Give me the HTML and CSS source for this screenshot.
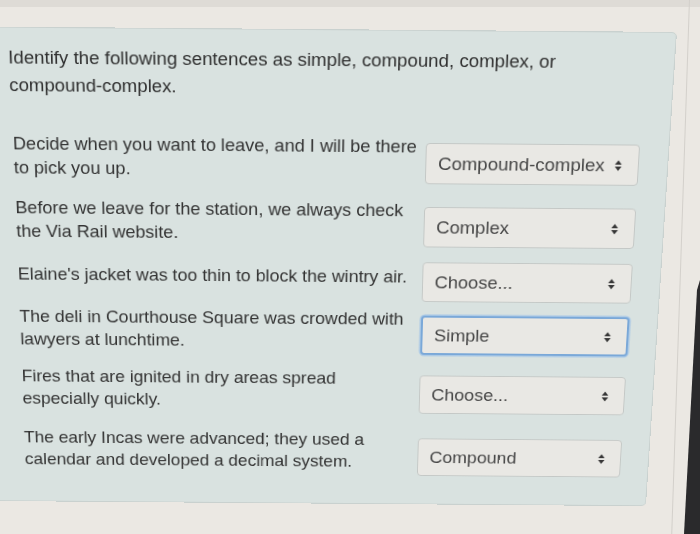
FILE: index.html
```html
<!DOCTYPE html>
<html>
<head>
<meta charset="utf-8">
<link rel="stylesheet" href="styles.css">
</head>
<body>
<div class="screen">
  <div class="top-band"></div>
  <div class="bezel-line"></div>
  <div class="bezel-dark"></div>
  <div class="panel">
    <p class="prompt">Identify the following sentences as simple, compound, complex, or<br>compound-complex.</p>
    <div class="rows">
      <div class="row">
        <p class="sentence">Decide when you want to leave, and I will be there<br>to pick you up.</p>
        <div class="select"><span>Compound-complex</span><svg class="arrows" viewBox="0 0 8 12"><path d="M4 0.5 L7.5 5 H0.5 Z M4 11.5 L7.5 7 H0.5 Z"/></svg></div>
      </div>
      <div class="row">
        <p class="sentence">Before we leave for the station, we always check<br>the Via Rail website.</p>
        <div class="select"><span>Complex</span><svg class="arrows" viewBox="0 0 8 12"><path d="M4 0.5 L7.5 5 H0.5 Z M4 11.5 L7.5 7 H0.5 Z"/></svg></div>
      </div>
      <div class="row">
        <p class="sentence">Elaine's jacket was too thin to block the wintry air.</p>
        <div class="select"><span>Choose...</span><svg class="arrows" viewBox="0 0 8 12"><path d="M4 0.5 L7.5 5 H0.5 Z M4 11.5 L7.5 7 H0.5 Z"/></svg></div>
      </div>
      <div class="row">
        <p class="sentence">The deli in Courthouse Square was crowded with<br>lawyers at lunchtime.</p>
        <div class="select focused"><span>Simple</span><svg class="arrows" viewBox="0 0 8 12"><path d="M4 0.5 L7.5 5 H0.5 Z M4 11.5 L7.5 7 H0.5 Z"/></svg></div>
      </div>
      <div class="row">
        <p class="sentence">Fires that are ignited in dry areas spread<br>especially quickly.</p>
        <div class="select"><span>Choose...</span><svg class="arrows" viewBox="0 0 8 12"><path d="M4 0.5 L7.5 5 H0.5 Z M4 11.5 L7.5 7 H0.5 Z"/></svg></div>
      </div>
      <div class="row">
        <p class="sentence">The early Incas were advanced; they used a<br>calendar and developed a decimal system.</p>
        <div class="select"><span>Compound</span><svg class="arrows" viewBox="0 0 8 12"><path d="M4 0.5 L7.5 5 H0.5 Z M4 11.5 L7.5 7 H0.5 Z"/></svg></div>
      </div>
    </div>
  </div>
</div>
</body>
</html>
```
FILE: styles.css
```css
html, body {
  margin: 0;
  padding: 0;
}
body {
  background: #ebe8e3;
  font-family: "Liberation Sans", Arial, sans-serif;
  width: 700px;
  height: 534px;
  overflow: hidden;
}
.screen {
  position: relative;
  width: 700px;
  height: 534px;
  overflow: hidden;
  background: #ebe8e3;
}
.top-band {
  height: 7px;
  background: #dedbd6;
  margin-bottom: 22px;
}
.bezel-line {
  position: absolute;
  left: 680px;
  top: -20px;
  width: 1px;
  height: 580px;
  background: #d3d0cb;
  transform: rotate(1.9deg);
}
.bezel-dark {
  position: absolute;
  inset: 0;
  background: #2a2a2c;
  clip-path: polygon(697px 290px, 700px 280px, 700px 534px, 684px 534px);
}
.panel {
  margin-left: -25px;
  width: 702px;
  height: 512px;
  box-sizing: border-box;
  background: #d9e2e0;
  border: 1px solid #c9d1cf;
  border-radius: 5px;
  padding: 16px 0 0 31px;
  transform-origin: 329.5px 0;
  transform: rotate(0.45deg) matrix3d(1, 0, 0, 0, 0, 1, 0, 0.0001546, 0, 0, 1, 0, 0, 0, 0, 1);
}
.prompt {
  margin: 0 0 34px 0;
  font-size: 18.75px;
  line-height: 28px;
  color: #2f2f2f;
}
.rows {
  display: flex;
  flex-direction: column;
  gap: 8px;
  padding-left: 1.5px;
}
.row {
  display: grid;
  grid-template-columns: 420.5px 218px;
  align-items: center;
}
.row:nth-child(4),
.row:nth-child(5) {
  margin-top: -1px;
}
.row:nth-child(6) {
  margin-top: 2px;
}
.sentence {
  margin: 0 0 10px 0;
  font-size: 18.5px;
  line-height: 24.5px;
  color: #333;
}
.select {
  height: 43px;
  box-sizing: border-box;
  background: #e9e8e4;
  border: 1px solid #c4c8c6;
  border-radius: 4px;
  display: flex;
  align-items: center;
  justify-content: space-between;
  padding: 0 16px 0 12px;
  font-size: 19px;
  color: #464646;
}
.row:nth-child(6) .select {
  margin-top: 4px;
}
.select.focused {
  border: 2px solid #7aa8d8;
  box-shadow: 0 0 0 1.5px #a9c8e6;
}
.arrows {
  width: 8px;
  height: 12px;
  fill: #363636;
}
```
